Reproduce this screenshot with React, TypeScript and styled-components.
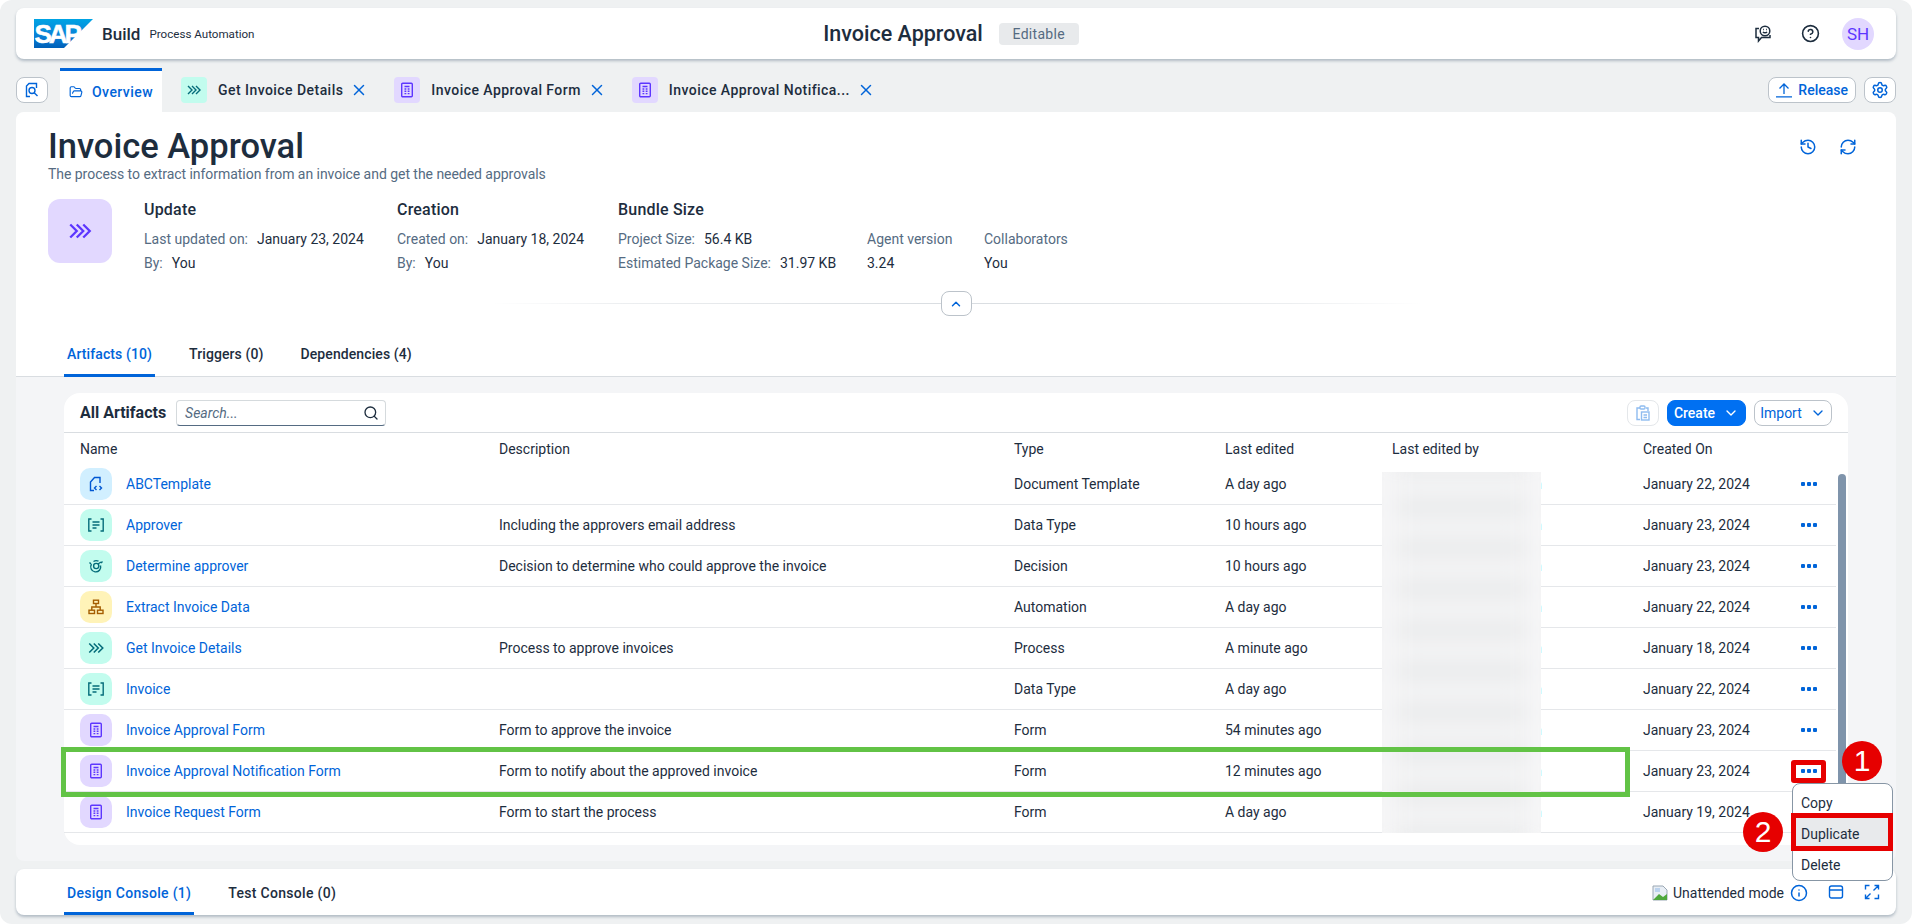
import { ReactNode } from 'react';
import styled, { createGlobalStyle } from 'styled-components';
import {
	ChevronDown,
	ChevronUp,
	CircleHelp,
	FolderOpen,
	History,
	Info,
	RefreshCw,
	Search,
	Settings,
	X,
} from 'lucide-react';

const BLUE = '#0064d9';
const TEXT = '#1d2d3e';
const MUTED = '#556b82';
const FONT = '"Roboto", "Liberation Sans", sans-serif';

const GlobalStyle = createGlobalStyle`
	html, body {
		margin: 0;
		padding: 0;
		background: #fff;
	}
	* {
		box-sizing: border-box;
	}
`;

const Frame = styled.div`
	display: flex;
	flex-direction: column;
	width: 1912px;
	height: 924px;
	padding: 8px 16px 9px;
	overflow: hidden;
	background: #eff1f2;
	border-radius: 12px;
	font-family: ${FONT};
	font-size: 14px;
	color: ${TEXT};
`;

/* ---------- shell bar ---------- */

const ShellBar = styled.header`
	flex: none;
	display: grid;
	grid-template-columns: 1fr auto 1fr;
	align-items: center;
	height: 51px;
	padding: 0 22px 0 18px;
	background: #fff;
	border-radius: 8px;
	box-shadow: 0 2px 3px rgba(85, 107, 130, 0.4);
`;

const Brand = styled.div`
	display: flex;
	align-items: center;
`;

const BrandName = styled.span`
	margin-left: 9px;
	font-size: 17px;
	font-weight: 500;
`;

const BrandProduct = styled.span`
	margin-left: 9px;
	font-size: 11.6px;
`;

const ShellCenter = styled.div`
	display: flex;
	align-items: center;
	gap: 16px;
	margin-right: 6px;
`;

const ShellTitle = styled.span`
	font-size: 21.5px;
	font-weight: 500;
`;

const Badge = styled.span`
	display: flex;
	align-items: center;
	justify-content: center;
	width: 80px;
	height: 22px;
	background: #e8eaec;
	border-radius: 4px;
	font-size: 14px;
	letter-spacing: 0.3px;
	color: ${MUTED};
`;

const ShellActions = styled.div`
	display: flex;
	align-items: center;
	justify-content: flex-end;
	gap: 29px;
`;

const ShellIcon = styled.span`
	display: flex;
	color: ${TEXT};
`;

const Avatar = styled.span`
	display: flex;
	align-items: center;
	justify-content: center;
	width: 32px;
	height: 32px;
	margin-left: -7px;
	background: #e2d8ff;
	border-radius: 50%;
	font-size: 17px;
	color: #5d36ff;
`;

/* ---------- object tabs ---------- */

const TabRow = styled.nav`
	flex: none;
	display: flex;
	align-items: center;
	height: 44px;
	margin-top: 9px;
`;

const IconButton = styled.button<{ $margin?: number }>`
	display: flex;
	align-items: center;
	justify-content: center;
	width: 32px;
	height: 26px;
	margin-left: ${(props) => props.$margin ?? 0}px;
	padding: 0;
	background: #fff;
	border: 1px solid #bcc3ca;
	border-radius: 8px;
	color: ${BLUE};
`;

const OverviewTab = styled.div`
	display: flex;
	align-items: center;
	gap: 9px;
	width: 102px;
	height: 44px;
	margin-left: 12px;
	padding-left: 9px;
	background: #fff;
	border-top: 3px solid ${BLUE};
	font-weight: 500;
	letter-spacing: 0.45px;
	color: ${BLUE};
`;

const ObjectTab = styled.div`
	display: flex;
	align-items: center;
	margin-left: 19px;
	margin-right: 7px;
	font-weight: 500;
	letter-spacing: 0.45px;
`;

const ObjectTabLabel = styled.span`
	margin: 0 7px 0 11px;
`;

const TabIconBox = styled.span<{ $bg: string; $fg: string }>`
	display: flex;
	align-items: center;
	justify-content: center;
	width: 26px;
	height: 26px;
	background: ${(props) => props.$bg};
	border-radius: 4px;
	color: ${(props) => props.$fg};
`;

const ReleaseButton = styled.button`
	display: flex;
	align-items: center;
	gap: 6px;
	height: 26px;
	margin-left: auto;
	padding: 0 7px;
	background: #fff;
	border: 1px solid #bcc3ca;
	border-radius: 8px;
	font-family: inherit;
	font-size: 14px;
	font-weight: 500;
	color: ${BLUE};
`;

/* ---------- main panel ---------- */

const Panel = styled.main`
	flex: 1;
	display: flex;
	flex-direction: column;
	min-height: 0;
	background: #f4f5f7;
	border-radius: 8px;
`;

const PanelHead = styled.section`
	flex: none;
	display: flex;
	flex-direction: column;
	height: 265px;
	padding: 14px 32px 0;
	background: #fff;
	border-radius: 8px 8px 0 0;
	border-bottom: 1px solid #d9dde1;
`;

const TitleRow = styled.div`
	display: flex;
	justify-content: space-between;
`;

const PageTitle = styled.h1`
	margin: 0;
	font-size: 34.5px;
	line-height: 40px;
	font-weight: 500;
`;

const TitleActions = styled.div`
	display: flex;
	gap: 22px;
	margin: 12px 7px 0 0;
	color: ${BLUE};
`;

const Subtitle = styled.p`
	margin: -1px 0 0;
	font-size: 14px;
	line-height: 18px;
	letter-spacing: -0.04px;
	color: ${MUTED};
`;

const InfoRow = styled.div`
	display: flex;
	margin-top: 16px;
`;

const BigIcon = styled.div`
	display: flex;
	flex: none;
	align-items: center;
	justify-content: center;
	width: 64px;
	height: 64px;
	margin-right: 32px;
	background: #e2d8ff;
	border-radius: 12px;
	color: #5d36ff;
`;

const InfoColumn = styled.div<{ $width: number }>`
	flex: none;
	width: ${(props) => props.$width}px;
`;

const InfoHeading = styled.div`
	height: 22px;
	font-size: 16px;
	line-height: 22px;
	font-weight: 500;
	letter-spacing: 0.2px;
`;

const InfoLine = styled.div<{ $first?: boolean }>`
	display: flex;
	gap: 9px;
	margin-top: ${(props) => (props.$first ? 9 : 6)}px;
	line-height: 18px;
`;

const InfoLabel = styled.span`
	color: ${MUTED};
`;

const CollapseRow = styled.div`
	display: flex;
	align-items: center;
	justify-content: center;
	margin: 19px -32px 0;
`;

const FadeLine = styled.span<{ $to: 'left' | 'right' }>`
	width: 450px;
	height: 1px;
	background: linear-gradient(to ${(props) => props.$to}, #d9dde1, #eceef0 70%, #fff);
`;

const CollapseButton = styled(IconButton)`
	width: 31px;
	height: 25px;
`;

const SectionTabs = styled.div`
	display: flex;
	gap: 31px;
	height: 39px;
	margin: auto 0 -1px 16px;
`;

const SectionTab = styled.div<{ $active?: boolean }>`
	padding: 7px 3px 0;
	font-weight: 500;
	line-height: 18px;
	letter-spacing: 0.1px;
	color: ${(props) => (props.$active ? BLUE : TEXT)};
	border-bottom: 3px solid ${(props) => (props.$active ? BLUE : 'transparent')};
`;

/* ---------- artifacts table ---------- */

const Card = styled.section`
	position: relative;
	flex: none;
	height: 452px;
	margin: 16px 48px 0;
	background: #fff;
	border-radius: 16px;
`;

const Toolbar = styled.div`
	display: flex;
	align-items: center;
	height: 40px;
	padding: 0 16px;
	border-bottom: 1px solid #d9dde1;
`;

const ToolbarTitle = styled.span`
	font-size: 16px;
	font-weight: 700;
`;

const SearchBox = styled.div`
	display: flex;
	align-items: center;
	justify-content: space-between;
	width: 210px;
	height: 26px;
	margin-left: 10px;
	padding: 0 6px 0 8px;
	border: 1px solid #d5dadd;
	border-bottom-color: #556b82;
	border-radius: 4px;
	font-style: italic;
	color: ${MUTED};
`;

const ToolbarActions = styled.div`
	display: flex;
	align-items: center;
	gap: 8px;
	margin-left: auto;
`;

const PasteButton = styled(IconButton)`
	border-color: #e4e7ea;
	color: #8fbcf0;
`;

const MenuButton = styled.button<{ $primary?: boolean }>`
	display: flex;
	align-items: center;
	justify-content: center;
	gap: 8px;
	width: ${(props) => (props.$primary ? 79 : 78)}px;
	height: 26px;
	padding: 0;
	background: ${(props) => (props.$primary ? '#0070f2' : '#fff')};
	border: 1px solid ${(props) => (props.$primary ? '#0070f2' : '#bcc3ca')};
	border-radius: 8px;
	font-family: inherit;
	font-size: 14px;
	font-weight: ${(props) => (props.$primary ? 500 : 400)};
	color: ${(props) => (props.$primary ? '#fff' : BLUE)};
`;

const GRID = '419px 515px 211px 167px 251px 158px 1fr';

const HeadRow = styled.div`
	display: grid;
	grid-template-columns: ${GRID};
	align-items: center;
	height: 31px;
	padding-left: 16px;
	padding-right: 12px;
`;

const Body = styled.div`
	padding-right: 12px;
`;

const Row = styled.div`
	display: grid;
	grid-template-columns: ${GRID};
	align-items: center;
	height: 41px;
	padding-left: 16px;
	border-bottom: 1px solid #e5e7ea;
`;

const NameCell = styled.a`
	display: flex;
	align-items: center;
	gap: 14px;
	color: ${BLUE};
`;

const ArtifactIcon = styled.span<{ $bg: string; $fg: string }>`
	display: flex;
	align-items: center;
	justify-content: center;
	width: 32px;
	height: 32px;
	background: ${(props) => props.$bg};
	border-radius: 10px;
	color: ${(props) => props.$fg};
`;

const EditorCell = styled.span`
	padding-left: 142px;
	color: ${BLUE};
`;

const Dots = styled.span`
	display: flex;
	gap: 2px;
	color: ${BLUE};
`;

const Dot = styled.i`
	display: block;
	width: 4px;
	height: 4px;
	background: currentColor;
	border-radius: 1px;
`;

const Scrollbar = styled.div`
	position: absolute;
	top: 81px;
	right: 2px;
	width: 8px;
	height: 320px;
	background: #7f94ab;
	border-radius: 4px 4px 0 0;
`;

const BlurMask = styled.div`
	position: absolute;
	top: 79px;
	left: 1318px;
	width: 159px;
	height: 361px;
	overflow: hidden;
	background: #f6f6f7;
`;

const BlurBars = styled.div`
	position: absolute;
	inset: -14px 14px;
	background: repeating-linear-gradient(to bottom, #eaebec 0 16px, #f6f6f7 24px 34px, #eaebec 41px);
	filter: blur(10px);
`;

const GreenBox = styled.div`
	position: absolute;
	top: 354px;
	left: -3px;
	width: 1569px;
	height: 50px;
	border: 5px solid #62c346;
	pointer-events: none;
`;

const RedBox = styled.div`
	position: absolute;
	top: 367px;
	left: 1727px;
	width: 35px;
	height: 23px;
	border: 5px solid #e60000;
	border-radius: 3px;
`;

const StepBadge = styled.div<{ $x: number; $y: number }>`
	position: absolute;
	top: ${(props) => props.$y}px;
	left: ${(props) => props.$x}px;
	display: flex;
	align-items: center;
	justify-content: center;
	width: 40px;
	height: 40px;
	background: #e60000;
	border-radius: 50%;
	font-family: 'Liberation Sans', sans-serif;
	font-size: 30px;
	color: #fff;
`;

const Menu = styled.div`
	position: absolute;
	top: 390px;
	left: 1728px;
	width: 101px;
	height: 98px;
	padding: 3px 0;
	background: #fff;
	border: 1px solid #8796a5;
	border-radius: 8px;
	z-index: 2;
`;

const MenuItem = styled.div<{ $selected?: boolean }>`
	display: flex;
	align-items: center;
	height: 31px;
	padding-left: 8px;
	background: ${(props) => (props.$selected ? '#e8eaec' : 'transparent')};
	color: ${TEXT};
`;

const MenuHighlight = styled.div`
	position: absolute;
	top: 420px;
	left: 1727px;
	width: 102px;
	height: 38px;
	border: 5px solid #e60000;
	z-index: 3;
`;

/* ---------- console ---------- */

const ConsoleBar = styled.footer`
	flex: none;
	display: flex;
	align-items: flex-end;
	height: 46px;
	margin-top: 8px;
	padding: 0 16px 0 48px;
	background: #fff;
	border-radius: 8px;
	box-shadow: 0 2px 3px rgba(85, 107, 130, 0.4);
`;

const ConsoleTabs = styled(SectionTabs)`
	height: 46px;
	margin: 0;
`;

const ConsoleTab = styled(SectionTab)`
	padding-top: 15px;
	letter-spacing: 0.3px;
`;

const ConsoleTools = styled.div`
	display: flex;
	align-items: center;
	gap: 5px;
	height: 46px;
	margin-left: auto;
	padding-top: 2px;
	color: ${BLUE};
`;

const ModeLabel = styled.span`
	color: ${TEXT};
`;

const ToolGroup = styled.span`
	display: flex;
	gap: 20px;
	margin-left: 1px;
`;

/* ---------- drawn icons ---------- */

type GlyphProps = { size?: number };

const Glyph = ({ size = 16, children }: GlyphProps & { children: ReactNode }) => (
	<svg width={size} height={size} viewBox='0 0 16 16' fill='none' stroke='currentColor' strokeWidth='1.4'>
		{children}
	</svg>
);

const ProcessGlyph = ({ size = 16 }: GlyphProps) => (
	<Glyph size={size}>
		<path d='M2 4l4 4-4 4M6 4l4 4-4 4M10 4l4 4-4 4' />
	</Glyph>
);

const FormGlyph = () => (
	<Glyph>
		<rect x='2.7' y='1.2' width='10.6' height='13.6' rx='1' />
		<path d='M5.5 4.5h5M5.5 7h1.8M8.7 7h1.8M5.5 9.3h1.8M8.7 9.3h1.8M5.5 11.6h1.8M8.7 11.6h1.8' />
	</Glyph>
);

const DataGlyph = () => (
	<Glyph>
		<path d='M3.5 2H.8v12h2.7M12.5 2h2.7v12h-2.7M4.5 5h7M4.5 8h7M4.5 11h4' />
	</Glyph>
);

const TemplateGlyph = () => (
	<Glyph>
		<path d='M12 7V1.5H6.5L2.5 6v8.5H6' />
		<path d='M8.5 10l-2 2 2 2M11.5 10l2 2-2 2' />
	</Glyph>
);

const DecisionGlyph = () => (
	<Glyph>
		<path d='M3.5 6.2a5 5 0 1 0 9 1.3M5.5 3.5a5 5 0 0 1 5-.3' />
		<circle cx='8.2' cy='8' r='2.6' />
		<path d='M1.5 4.5L3 6M14.5 3.5L13 5M10 6l3-2' />
	</Glyph>
);

const AutomationGlyph = () => (
	<Glyph>
		<rect x='5.5' y='1.2' width='5' height='3.3' />
		<rect x='1' y='11.2' width='5.5' height='3.3' />
		<rect x='9.5' y='11.2' width='5.5' height='3.3' />
		<path d='M8 4.5V8M3.8 11V8h8.4v3' />
	</Glyph>
);

const SearchDocGlyph = () => (
	<Glyph>
		<path d='M6 14.5H2.5V4L5 1.5h7.5V6' />
		<circle cx='8' cy='8.5' r='3' />
		<path d='M10.2 10.7L13.5 14' />
	</Glyph>
);

const FeedbackGlyph = () => (
	<svg width='18' height='18' viewBox='0 0 18 18' fill='none' stroke='currentColor' strokeWidth='1.5'>
		<circle cx='11' cy='6' r='4.8' />
		<path d='M9 6.8c.8 1.3 3.2 1.3 4 0' />
		<path d='M9.2 4.5h.8M12 4.5h.8' />
		<path d='M5 3.5H2v9h2.5V16l3-3.5H16V10' />
	</svg>
);

const ReleaseGlyph = () => (
	<svg width='16' height='16' viewBox='0 0 16 16' fill='none' stroke='currentColor' strokeWidth='1.3'>
		<path d='M8 12V2M3.5 6.5L8 2l4.5 4.5M0 14.8h16' />
	</svg>
);

const PasteGlyph = () => (
	<Glyph>
		<path d='M5 3H2v11.5h3' />
		<rect x='5' y='1' width='5' height='3' rx='1' />
		<path d='M11 3h2v3' />
		<rect x='6.5' y='7' width='7.5' height='8' />
		<path d='M8.5 10H12M8.5 12.5H12' />
	</Glyph>
);

const PanelGlyph = () => (
	<Glyph>
		<rect x='1.5' y='2' width='13' height='12' rx='2' />
		<path d='M1.5 6h13' />
	</Glyph>
);

const ExpandGlyph = () => (
	<Glyph>
		<path d='M1.5 5.5v-4h4M10.500 1.5h4v4M14.5 10.5v4h-4M5.5 14.5h-4v-4M9.5 6.5l5-5M6.5 9.5l-5 5' />
	</Glyph>
);

const BrokenImage = () => (
	<svg width='16' height='16' viewBox='0 0 16 16'>
		<path d='M1 1h10l4 4v10H1z' fill='#e8eef5' stroke='#9aa7b4' />
		<path d='M1 15l6-6 4 3 4-3v6z' fill='#4fa83d' />
		<path d='M3 3h5v4H3z' fill='#bcd3ee' />
	</svg>
);

const SapLogo = () => (
	<svg width='59' height='29' viewBox='0 0 59 29'>
		<defs>
			<linearGradient id='sapFill' x1='0' y1='0' x2='0' y2='1'>
				<stop offset='0' stopColor='#00a4e4' />
				<stop offset='0.6' stopColor='#0a7fd6' />
				<stop offset='1' stopColor='#0060b8' />
			</linearGradient>
		</defs>
		<path d='M0 0h59L30 29H0z' fill='url(#sapFill)' />
		<text
			x='0.5'
			y='24'
			fontFamily='"Liberation Sans", sans-serif'
			fontSize='26'
			fontWeight='700'
			letterSpacing='-3'
			stroke='#fff'
			strokeWidth='0.5'
			fill='#fff'
		>
			SAP
		</text>
	</svg>
);

/* ---------- data ---------- */

type Kind = 'template' | 'data' | 'decision' | 'automation' | 'process' | 'form';

const KINDS: Record<Kind, { bg: string; fg: string; icon: ReactNode }> = {
	template: { bg: '#d1efff', fg: '#0057d2', icon: <TemplateGlyph /> },
	data: { bg: '#c2fcee', fg: '#046c7a', icon: <DataGlyph /> },
	decision: { bg: '#c2fcee', fg: '#046c7a', icon: <DecisionGlyph /> },
	automation: { bg: '#fff3b8', fg: '#a45d00', icon: <AutomationGlyph /> },
	process: { bg: '#c2fcee', fg: '#046c7a', icon: <ProcessGlyph size={18} /> },
	form: { bg: '#e2d8ff', fg: '#5d36ff', icon: <FormGlyph /> },
};

const ARTIFACTS: { name: string; description: string; type: string; edited: string; created: string; kind: Kind }[] = [
	{ name: 'ABCTemplate', description: '', type: 'Document Template', edited: 'A day ago', created: 'January 22, 2024', kind: 'template' },
	{ name: 'Approver', description: 'Including the approvers email address', type: 'Data Type', edited: '10 hours ago', created: 'January 23, 2024', kind: 'data' },
	{ name: 'Determine approver', description: 'Decision to determine who could approve the invoice', type: 'Decision', edited: '10 hours ago', created: 'January 23, 2024', kind: 'decision' },
	{ name: 'Extract Invoice Data', description: '', type: 'Automation', edited: 'A day ago', created: 'January 22, 2024', kind: 'automation' },
	{ name: 'Get Invoice Details', description: 'Process to approve invoices', type: 'Process', edited: 'A minute ago', created: 'January 18, 2024', kind: 'process' },
	{ name: 'Invoice', description: '', type: 'Data Type', edited: 'A day ago', created: 'January 22, 2024', kind: 'data' },
	{ name: 'Invoice Approval Form', description: 'Form to approve the invoice', type: 'Form', edited: '54 minutes ago', created: 'January 23, 2024', kind: 'form' },
	{ name: 'Invoice Approval Notification Form', description: 'Form to notify about the approved invoice', type: 'Form', edited: '12 minutes ago', created: 'January 23, 2024', kind: 'form' },
	{ name: 'Invoice Request Form', description: 'Form to start the process', type: 'Form', edited: 'A day ago', created: 'January 19, 2024', kind: 'form' },
];

const OPEN_TABS: { label: string; kind: Kind }[] = [
	{ label: 'Get Invoice Details', kind: 'process' },
	{ label: 'Invoice Approval Form', kind: 'form' },
	{ label: 'Invoice Approval Notifica...', kind: 'form' },
];

const App = () => (
	<Frame>
		<GlobalStyle />
		<ShellBar>
			<Brand>
				<SapLogo />
				<BrandName>Build</BrandName>
				<BrandProduct>Process Automation</BrandProduct>
			</Brand>
			<ShellCenter>
				<ShellTitle>Invoice Approval</ShellTitle>
				<Badge>Editable</Badge>
			</ShellCenter>
			<ShellActions>
				<ShellIcon>
					<FeedbackGlyph />
				</ShellIcon>
				<ShellIcon>
					<CircleHelp size={19} />
				</ShellIcon>
				<Avatar>SH</Avatar>
			</ShellActions>
		</ShellBar>

		<TabRow>
			<IconButton>
				<SearchDocGlyph />
			</IconButton>
			<OverviewTab>
				<FolderOpen size={14} />
				Overview
			</OverviewTab>
			{OPEN_TABS.map((tab) => (
				<ObjectTab key={tab.label}>
					<TabIconBox $bg={KINDS[tab.kind].bg} $fg={KINDS[tab.kind].fg}>
						{tab.kind === 'process' ? <ProcessGlyph size={16} /> : <FormGlyph />}
					</TabIconBox>
					<ObjectTabLabel>{tab.label}</ObjectTabLabel>
					<X size={18} color={BLUE} />
				</ObjectTab>
			))}
			<ReleaseButton>
				<ReleaseGlyph />
				Release
			</ReleaseButton>
			<IconButton $margin={8}>
				<Settings size={18} />
			</IconButton>
		</TabRow>

		<Panel>
			<PanelHead>
				<TitleRow>
					<PageTitle>Invoice Approval</PageTitle>
					<TitleActions>
						<History size={18} />
						<RefreshCw size={18} />
					</TitleActions>
				</TitleRow>
				<Subtitle>The process to extract information from an invoice and get the needed approvals</Subtitle>
				<InfoRow>
					<BigIcon>
						<ProcessGlyph size={26} />
					</BigIcon>
					<InfoColumn $width={253}>
						<InfoHeading>Update</InfoHeading>
						<InfoLine $first>
							<InfoLabel>Last updated on:</InfoLabel>
							<span>January 23, 2024</span>
						</InfoLine>
						<InfoLine>
							<InfoLabel>By:</InfoLabel>
							<span>You</span>
						</InfoLine>
					</InfoColumn>
					<InfoColumn $width={221}>
						<InfoHeading>Creation</InfoHeading>
						<InfoLine $first>
							<InfoLabel>Created on:</InfoLabel>
							<span>January 18, 2024</span>
						</InfoLine>
						<InfoLine>
							<InfoLabel>By:</InfoLabel>
							<span>You</span>
						</InfoLine>
					</InfoColumn>
					<InfoColumn $width={249}>
						<InfoHeading>Bundle Size</InfoHeading>
						<InfoLine $first>
							<InfoLabel>Project Size:</InfoLabel>
							<span>56.4 KB</span>
						</InfoLine>
						<InfoLine>
							<InfoLabel>Estimated Package Size:</InfoLabel>
							<span>31.97 KB</span>
						</InfoLine>
					</InfoColumn>
					<InfoColumn $width={117}>
						<InfoHeading />
						<InfoLine $first>
							<InfoLabel>Agent version</InfoLabel>
						</InfoLine>
						<InfoLine>
							<span>3.24</span>
						</InfoLine>
					</InfoColumn>
					<InfoColumn $width={100}>
						<InfoHeading />
						<InfoLine $first>
							<InfoLabel>Collaborators</InfoLabel>
						</InfoLine>
						<InfoLine>
							<span>You</span>
						</InfoLine>
					</InfoColumn>
				</InfoRow>
				<CollapseRow>
					<FadeLine $to='left' />
					<CollapseButton>
						<ChevronUp size={14} strokeWidth={2.5} />
					</CollapseButton>
					<FadeLine $to='right' />
				</CollapseRow>
				<SectionTabs>
					<SectionTab $active>Artifacts (10)</SectionTab>
					<SectionTab>Triggers (0)</SectionTab>
					<SectionTab>Dependencies (4)</SectionTab>
				</SectionTabs>
			</PanelHead>

			<Card>
				<Toolbar>
					<ToolbarTitle>All Artifacts</ToolbarTitle>
					<SearchBox>
						Search...
						<Search size={16} color={TEXT} />
					</SearchBox>
					<ToolbarActions>
						<PasteButton>
							<PasteGlyph />
						</PasteButton>
						<MenuButton $primary>
							Create
							<ChevronDown size={16} />
						</MenuButton>
						<MenuButton>
							Import
							<ChevronDown size={16} />
						</MenuButton>
					</ToolbarActions>
				</Toolbar>
				<HeadRow>
					<span>Name</span>
					<span>Description</span>
					<span>Type</span>
					<span>Last edited</span>
					<span>Last edited by</span>
					<span>Created On</span>
				</HeadRow>
				<Body>
					{ARTIFACTS.map((item) => (
						<Row key={item.name}>
							<NameCell>
								<ArtifactIcon $bg={KINDS[item.kind].bg} $fg={KINDS[item.kind].fg}>
									{KINDS[item.kind].icon}
								</ArtifactIcon>
								{item.name}
							</NameCell>
							<span>{item.description}</span>
							<span>{item.type}</span>
							<span>{item.edited}</span>
							<EditorCell>n</EditorCell>
							<span>{item.created}</span>
							<Dots>
								<Dot />
								<Dot />
								<Dot />
							</Dots>
						</Row>
					))}
				</Body>
				<Scrollbar />
				<BlurMask>
					<BlurBars />
				</BlurMask>
				<GreenBox />
				<RedBox />
				<Menu>
					<MenuItem>Copy</MenuItem>
					<MenuItem $selected>Duplicate</MenuItem>
					<MenuItem>Delete</MenuItem>
				</Menu>
				<MenuHighlight />
				<StepBadge $x={1778} $y={348}>
					1
				</StepBadge>
				<StepBadge $x={1679} $y={419}>
					2
				</StepBadge>
			</Card>
		</Panel>

		<ConsoleBar>
			<ConsoleTabs>
				<ConsoleTab $active>Design Console (1)</ConsoleTab>
				<ConsoleTab>Test Console (0)</ConsoleTab>
			</ConsoleTabs>
			<ConsoleTools>
				<BrokenImage />
				<ModeLabel>Unattended mode</ModeLabel>
				<ToolGroup>
					<Info size={18} />
					<PanelGlyph />
					<ExpandGlyph />
				</ToolGroup>
			</ConsoleTools>
		</ConsoleBar>
	</Frame>
);

export default App;
